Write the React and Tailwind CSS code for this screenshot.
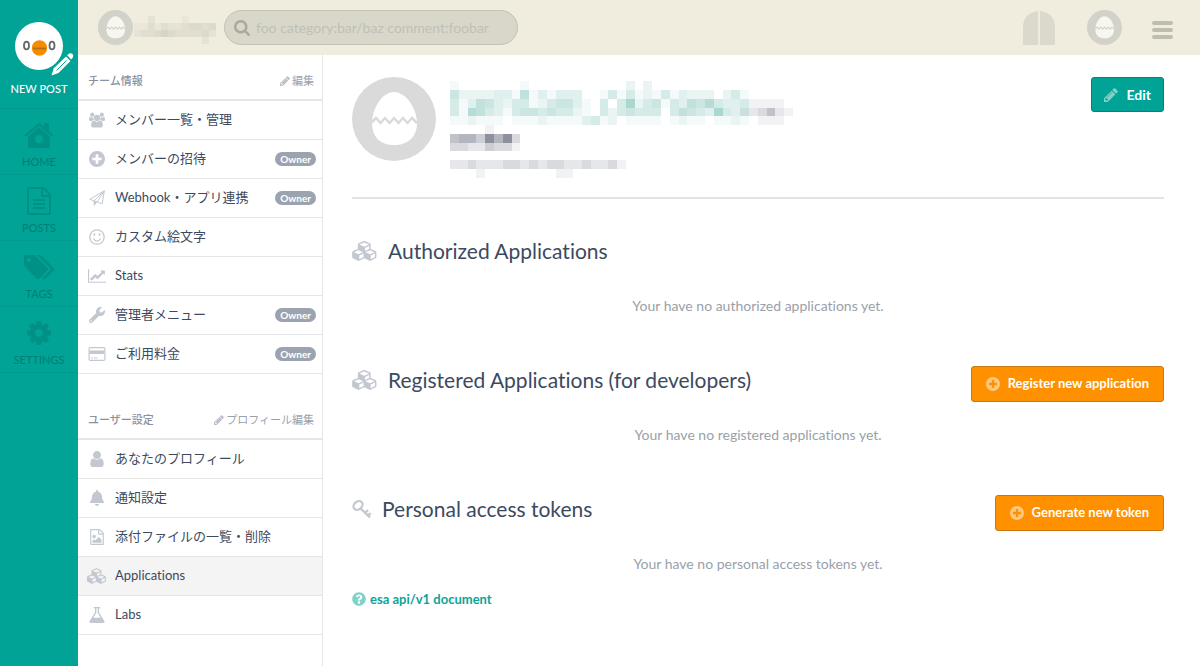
/**
 * App.jsx
 * Team settings page: nav rail, top bar, settings menu and the Applications panel.
 */
import { FaBell, FaQuestionCircle, FaWrench } from 'react-icons/fa';

// Solid glyphs drawn on a 1792 unit tall grid
const GLYPHS = {
  pencil: {
    box: '128 128 1536 1536',
    d: 'M491 1536l91-91-235-235-91 91v107h128v128h107zm523-928q0-22-22-22-10 0-17 7l-542 542q-7 7-7 17 0 22 22 22 10 0 17-7l542-542q7-7 7-17zm-54-192l416 416-832 832h-416v-416zm683 96q0 53-37 90l-166 166-416-416 166-165q36-38 90-38 53 0 91 38l235 234q37 39 37 91z',
  },
  plus: {
    box: '128 128 1536 1536',
    d: 'M1344 960v-128q0-26-19-45t-45-19h-256v-256q0-26-19-45t-45-19h-128q-26 0-45 19t-19 45v256h-256q-26 0-45 19t-19 45v128q0 26 19 45t45 19h256v256q0 26 19 45t45 19h128q26 0 45-19t19-45v-256h256q26 0 45-19t19-45zm320-64q0 209-103 385.5t-279.5 279.5-385.5 103-385.5-103-279.5-279.5-103-385.5 103-385.5 279.5-279.5 385.5-103 385.5 103 279.5 279.5 103 385.5z',
  },
  search: {
    box: '64 128 1664 1664',
    d: 'M1216 832q0-185-131.5-316.5t-316.5-131.5-316.5 131.5-131.5 316.5 131.5 316.5 316.5 131.5 316.5-131.5 131.5-316.5zm512 832q0 52-38 90t-90 38q-54 0-90-38l-343-342q-179 124-399 124-143 0-273.5-55.5t-225-150-150-225-55.5-273.5 55.5-273.5 150-225 225-150 273.5-55.5 273.5 55.5 225 150 150 225 55.5 273.5q0 220-124 399l343 343q37 37 37 90z',
  },
  user: {
    box: '256 128 1280 1536',
    d: 'M1536 1399q0 109-62.5 187t-150.5 78h-854q-88 0-150.5-78t-62.5-187q0-85 8.5-160.5t31.5-152 58.5-131 94-89 134.5-34.5q131 128 313 128t313-128q76 0 134.5 34.5t94 89 58.5 131 31.5 152 8.5 160.5zm-256-887q0 159-112.5 271.5t-271.5 112.5-271.5-112.5-112.5-271.5 112.5-271.5 271.5-112.5 271.5 112.5 112.5 271.5z',
  },
  users: {
    box: '64 0 1920 1792',
    d: 'M657 896q-162 5-265 128h-134q-82 0-138-40.5t-56-118.5q0-353 124-353 6 0 43.5 21t97.5 42.5 119 21.5q67 0 133-23-5 37-5 66 0 139 81 256zm1071 637q0 120-73 189.5t-194 69.5h-874q-121 0-194-69.5t-73-189.5q0-53 3.5-103.5t14-109 26.5-108.5 43-97.5 62-81 85.5-53.5 111.5-20q10 0 43 21.5t73 48 107 48 135 21.5 135-21.5 107-48 73-48 43-21.5q61 0 111.5 20t85.5 53.5 62 81 43 97.5 26.5 108.5 14 109 3.5 103.5zm-1024-1277q0 106-75 181t-181 75-181-75-75-181 75-181 181-75 181 75 75 181zm704 384q0 159-112.5 271.5t-271.5 112.5-271.5-112.5-112.5-271.5 112.5-271.5 271.5-112.5 271.5 112.5 112.5 271.5zm576 225q0 78-56 118.5t-138 40.5h-134q-103-123-265-128 81-117 81-256 0-29-5-66 66 23 133 23 59 0 119-21.5t97.5-42.5 43.5-21q124 0 124 353zm-128-609q0 106-75 181t-181 75-181-75-75-181 75-181 181-75 181 75 75 181z',
  },
  chart: {
    box: '0 128 2048 1536',
    d: 'M2048 1536v128h-2048v-1536h128v1408h1920zm-128-1248v435q0 21-19.5 29.5t-35.5-7.5l-121-121-633 633q-10 10-23 10t-23-10l-233-233-416 416-192-192 585-585q10-10 23-10t23 10l233 233 464-464-121-121q-16-16-7.5-35.5t29.5-19.5h435q14 0 23 9t9 23z',
  },
  cubes: {
    box: '0 0 2304 1792',
    d: 'M640 1632l384-192v-314l-384 164v342zm-64-454l404-173-404-173-404 173zm1088 454l384-192v-314l-384 164v342zm-64-454l404-173-404-173-404 173zm-448-293l384-165v-266l-384 164v267zm-64-379l441-189-441-189-441 189zm1088 518v416q0 36-19 67t-52 47l-448 224q-25 14-57 14t-57-14l-448-224q-4-2-7-4-2 2-7 4l-448 224q-25 14-57 14t-57-14l-448-224q-33-16-52-47t-19-67v-416q0-38 21.5-70t56.5-48l434-186v-400q0-38 21.5-70t56.5-48l448-192q23-10 50-10t50 10l448 192q35 16 56.5 48t21.5 70v400l434 186q36 16 57 48t21 70z',
  },
  tags: {
    box: '0 128 1899 1515',
    d: 'M448 448q0-53-37.5-90.5t-90.5-37.5-90.5 37.5-37.5 90.5 37.5 90.5 90.5 37.5 90.5-37.5 37.5-90.5zm1067 576q0 53-37 90l-491 492q-39 37-91 37-53 0-90-37l-715-716q-38-37-64.5-101t-26.5-117v-416q0-52 38-90t90-38h416q53 0 117 26.5t102 64.5l715 714q37 39 37 91zm384 0q0 53-37 90l-491 492q-39 37-91 37-36 0-59-14t-53-45l470-470q37-37 37-90 0-52-37-91l-715-714q-38-38-102-64.5t-117-26.5h224q53 0 117 26.5t102 64.5l715 714q37 39 37 91z',
  },
  cog: {
    box: '128 128 1536 1536',
    d: 'M1152 896q0-106-75-181t-181-75-181 75-75 181 75 181 181 75 181-75 75-181zm512-109v222q0 12-8 23t-20 13l-185 28q-19 54-39 91 35 50 107 138 10 12 10 25t-9 23q-27 37-99 108t-94 71q-12 0-26-9l-138-108q-44 23-91 38-16 136-29 186-7 28-36 28h-222q-14 0-24.5-8.5t-11.5-21.5l-28-184q-49-16-90-37l-141 107q-10 9-25 9-14 0-25-11-126-114-165-168-7-10-7-23 0-12 8-23 15-21 51-66.5t54-70.5q-27-50-41-99l-183-27q-13-2-21-12.5t-8-23.5v-222q0-12 8-23t19-13l186-28q14-46 39-92-40-57-107-138-10-12-10-24 0-10 9-23 26-36 98.5-107.5t94.5-71.5q13 0 26 10l138 107q44-23 91-38 16-136 29-186 7-28 36-28h222q14 0 24.5 8.5t11.5 21.5l28 184q49 16 90 37l142-107q9-9 24-9 13 0 25 10 129 119 165 170 7 8 7 22 0 12-8 23-15 21-51 66.5t-54 70.5q26 50 41 98l183 28q13 2 21 12.5t8 23.5z',
  },
  file: {
    box: '128 0 1536 1792',
    d: 'M1596 380q28 28 48 76t20 88v1152q0 40-28 68t-68 28h-1344q-40 0-68-28t-28-68v-1600q0-40 28-68t68-28h896q40 0 88 20t76 48zm-444-244v376h376q-10-29-22-41l-313-313q-12-12-41-22zm384 1528v-1024h-416q-40 0-68-28t-28-68v-416h-768v1536h1280zm-1024-864q0-14 9-23t23-9h704q14 0 23 9t9 23v64q0 14-9 23t-23 9h-704q-14 0-23-9t-9-23v-64zm736 224q14 0 23 9t9 23v64q0 14-9 23t-23 9h-704q-14 0-23-9t-9-23v-64q0-14 9-23t23-9h704zm0 256q14 0 23 9t9 23v64q0 14-9 23t-23 9h-704q-14 0-23-9t-9-23v-64q0-14 9-23t23-9h704z',
  },
  image: {
    box: '128 0 1536 1792',
    d: 'M1596 380q28 28 48 76t20 88v1152q0 40-28 68t-68 28h-1344q-40 0-68-28t-28-68v-1600q0-40 28-68t68-28h896q40 0 88 20t76 48zm-444-244v376h376q-10-29-22-41l-313-313q-12-12-41-22zm384 1528v-1024h-416q-40 0-68-28t-28-68v-416h-768v1536h1280zm-128-448v320h-1024v-192l192-192 128 128 384-384zm-832-192q-80 0-136-56t-56-136 56-136 136-56 136 56 56 136-56 136-136 56z',
  },
  flask: {
    box: '96 128 1472 1536',
    d: 'M1527 1447q56 89 21.5 152.5t-140.5 63.5h-1152q-106 0-140.5-63.5t21.5-152.5l503-793v-399h-64q-26 0-45-19t-19-45 19-45 45-19h512q26 0 45 19t19 45-19 45-45 19h-64v399zm-779-725l-272 429h712l-272-429-20-31v-436h-128v436z',
  },
};

function Glyph({ name, className }) {
  return (
    <svg viewBox={GLYPHS[name].box} fill="currentColor" className={className} aria-hidden="true">
      <path d={GLYPHS[name].d} />
    </svg>
  );
}

function HomeIcon({ className }) {
  return (
    <svg viewBox="0 0 29 25" className={className} aria-hidden="true">
      <path d="M1 13.5L14.5 2 28 13.5" fill="none" stroke="currentColor" strokeWidth="2" />
      <path d="M19.5 1H24v8l-4.500-4z" fill="currentColor" />
      <path
        d="M14.500 5L25 14v9.500q0 1.500-1.500 1.500h-18Q4 25 4 23.500V14zm0 7.500a4 4 0 1 0 0 8 4 4 0 1 0 0-8z"
        fill="currentColor"
        fillRule="evenodd"
      />
    </svg>
  );
}

function PlaneIcon({ className }) {
  return (
    <svg viewBox="0 0 16 16" className={className} fill="none" stroke="currentColor" aria-hidden="true">
      <path d="M15.300.8L.9 9.200l4 1.700L15.300.8 13.200 13.800 8.300 11.800 15.300.8z" strokeLinejoin="round" />
      <path d="M5.200 10.900v4.400l2.700-3.300z" fill="currentColor" strokeLinejoin="round" />
    </svg>
  );
}

function SmileIcon({ className }) {
  return (
    <svg viewBox="0 0 16 16" className={className} fill="none" stroke="currentColor" aria-hidden="true">
      <circle cx="8" cy="8" r="7.200" strokeWidth="1.300" />
      <path d="M4.700 9.800q1 2.400 3.300 2.400t3.300-2.400" strokeWidth="1.200" strokeLinecap="round" />
      <circle cx="5.400" cy="5.600" r="1.100" fill="currentColor" stroke="none" />
      <circle cx="10.600" cy="5.600" r="1.100" fill="currentColor" stroke="none" />
    </svg>
  );
}

function CardIcon({ className }) {
  return (
    <svg viewBox="0 0 17 14" className={className} aria-hidden="true">
      <rect x=".6" y=".6" width="15.800" height="12.800" rx="1.200" fill="none" stroke="currentColor" strokeWidth="1.200" />
      <path d="M1 3.500h15v3.500H1zM2.500 10.500h2v1h-2zM5.500 10.500h3.500v1H5.500z" fill="currentColor" />
    </svg>
  );
}

function KeyIcon({ className }) {
  return (
    <svg viewBox="0 0 20 19" className={className} fill="none" stroke="currentColor" aria-hidden="true">
      <ellipse cx="6" cy="5.500" rx="5" ry="3.800" strokeWidth="2.200" transform="rotate(-42 6 5.500)" />
      <path d="M8.500 8.500L18 17.500M13 13l3-3M16 15.800l2.600-2.600" strokeWidth="2.400" />
    </svg>
  );
}

function BirdLogo() {
  return (
    <svg viewBox="0 0 60 56" className="h-14 w-15" aria-hidden="true">
      <circle cx="25" cy="25" r="24" fill="#fff" />
      <circle cx="25.500" cy="27" r="7.700" fill="#f68b00" />
      <path d="M19 27.500h13" stroke="#b5711a" strokeWidth="1.800" />
      <ellipse cx="12.500" cy="24.500" rx="2.500" ry="3.800" fill="none" stroke="#666" strokeWidth="1.800" />
      <ellipse cx="38" cy="24.500" rx="2.500" ry="3.800" fill="none" stroke="#666" strokeWidth="1.800" />
      <path d="M37.500 54.500l2.300-7.200L52 35.500l4.500 4.500L44.500 52z" fill="#fff" />
      <path d="M42.500 49.500l10-10" stroke="#00a396" strokeWidth="1" />
      <path d="M53.200 34.300l2-1.700q2-1 3.300.5t.3 3.300l-1.700 2z" fill="#fff" />
    </svg>
  );
}

// The ring takes the text colour, the zigzag crack matches it
function EggAvatar({ className, shell = '#fff' }) {
  return (
    <svg viewBox="0 0 84 84" className={className} aria-hidden="true">
      <circle cx="42" cy="42" r="42" fill="currentColor" />
      <path d="M42 15c12 0 23 17 23 31 0 14-9 22-23 22s-22-8-22-22c0-14 10-31 22-31z" fill={shell} />
      <path
        d="M19 46l5-5 4.500 5 4.500-5 4.500 5 4.500-5 4.500 5 4.500-5 4.500 5 4.500-5 5 5"
        fill="none"
        stroke="currentColor"
        strokeWidth="2.500"
      />
    </svg>
  );
}

// Redacted text: each digit is the strength of one tile
const PROFILE_TEAL = [
  '1000000010000000000020200000000000',
  '5222233161313330014141214132220241',
  '4136532441245531040482451436574334',
  '4176431455454421042454440465438434',
  '1121110111211113412011110121101121',
];
const PROFILE_GRAY = [
  '',
  '',
  '000000000000000000000000000000000011110',
  '000000000000000000000000000000000123521',
  '000000000000000000000000000000000001110',
  '0000100',
  '56649693',
  '33224331',
  '',
  '22322233232332232231',
  '00010000000011000000',
];
const TEAM_GRAY = ['002000010000', '113132234434', '233454333342', '000000000020'];

function Tiles({ rows, color, strength }) {
  return rows.flatMap((row, y) =>
    [...row].map((level, x) =>
      level === '0' ? null : (
        <rect key={`${x}-${y}`} x={x} y={y} width="1" height="1" fill={color} fillOpacity={Number(level) * strength} />
      )
    )
  );
}

const NAV = [
  { label: 'HOME', icon: <HomeIcon className="h-[26px] w-[30px]" /> },
  { label: 'POSTS', icon: <Glyph name="file" className="h-7 w-6" /> },
  { label: 'TAGS', icon: <Glyph name="tags" className="h-6 w-[30px]" /> },
  { label: 'SETTINGS', icon: <Glyph name="cog" className="size-6" /> },
];

const TEAM_MENU = [
  { label: 'メンバー一覧・管理', icon: <Glyph name="users" className="size-4" /> },
  { label: 'メンバーの招待', icon: <Glyph name="plus" className="size-4" />, owner: true },
  { label: 'Webhook・アプリ連携', icon: <PlaneIcon className="size-4" />, owner: true },
  { label: 'カスタム絵文字', icon: <SmileIcon className="size-4" /> },
  { label: 'Stats', icon: <Glyph name="chart" className="h-[14px] w-[18px]" /> },
  { label: '管理者メニュー', icon: <FaWrench className="size-4 -scale-x-100 rotate-90" />, owner: true },
  { label: 'ご利用料金', icon: <CardIcon className="h-[14px] w-[18px]" />, owner: true },
];

const USER_MENU = [
  { label: 'あなたのプロフィール', icon: <Glyph name="user" className="h-4 w-[14px]" /> },
  { label: '通知設定', icon: <FaBell className="size-4" /> },
  { label: '添付ファイルの一覧・削除', icon: <Glyph name="image" className="h-4 w-[14px]" /> },
  { label: 'Applications', icon: <Glyph name="cubes" className="h-4 w-5" />, active: true },
  { label: 'Labs', icon: <Glyph name="flask" className="size-4" /> },
];

function MenuSection({ title, action, items }) {
  return (
    <section>
      <header className="flex h-[46px] items-center justify-between border-b-2 border-[#e6e6e6] pt-2 pr-2 pl-[10px] text-[11px]">
        <h2 className="font-medium text-[#8b91a0]">{title}</h2>
        <a href="#edit" className="flex items-center gap-[2px] text-[#9a9fae]">
          <Glyph name="pencil" className="size-[10px] text-[#b9bdc6]" />
          {action}
        </a>
      </header>
      <ul>
        {items.map((item) => (
          <li key={item.label} className="border-b border-[#e6e6e6]">
            <a
              href="#menu"
              className={
                item.active
                  ? 'flex h-[38px] items-center bg-[#f4f4f4] pr-[6px] pl-[9px]'
                  : 'flex h-[38px] items-center pr-[6px] pl-[9px]'
              }
            >
              <span className="flex w-5 justify-center text-[#c3c8d0]">{item.icon}</span>
              <span className="ml-2 flex-1 text-[13px] text-[#3c4a60]">{item.label}</span>
              {item.owner && (
                <span className="h-[14px] rounded-full bg-[#9ba3b0] px-[5px] text-[10px] leading-[14px] font-bold text-white">
                  Owner
                </span>
              )}
            </a>
          </li>
        ))}
      </ul>
    </section>
  );
}

function AppSection({ title, icon, empty, button }) {
  return (
    <section className="h-[129px]">
      <div className="flex h-9 items-center justify-between">
        <h2 className="flex items-center gap-[10px] text-[21px] text-[#3c4a60]">
          {icon}
          {title}
        </h2>
        {button && (
          <button className="mt-2 flex h-9 items-center gap-2 rounded-[3px] border border-[#c87a10] bg-[#ff9100] px-[14px] text-[13px] font-bold text-white">
            <Glyph name="plus" className="size-[14px] text-[#ffc87f]" />
            {button}
          </button>
        )}
      </div>
      <p className="mt-[27px] text-center text-[14px] leading-5 text-[#9a9fa9]">{empty}</p>
    </section>
  );
}

export default function App() {
  return (
    <div className="flex min-h-screen bg-white font-['Lato','Noto_Sans_CJK_JP',sans-serif] [font-variant-ligatures:none]">
      {/* Nav rail */}
      <nav className="w-[78px] shrink-0 bg-[#00a396] text-center text-[11px]">
        <a href="#new" className="flex h-[109px] flex-col items-center border-b border-[#009b8e] pt-[21px] text-white">
          <span className="ml-[10px]">
            <BirdLogo />
          </span>
          <span className="mt-1 leading-4 font-medium">NEW POST</span>
        </a>
        {NAV.map((item) => (
          <a
            key={item.label}
            href="#nav"
            className="flex h-[66px] flex-col items-center justify-end border-b border-[#009b8e] pb-1 text-[#007f75]"
          >
            <span className="flex h-7 items-center text-[#009085]">{item.icon}</span>
            <span className="mt-[5px] leading-4">{item.label}</span>
          </a>
        ))}
      </nav>

      <div className="flex min-w-0 flex-1 flex-col">
        {/* Top bar */}
        <header className="flex h-[55px] shrink-0 items-center bg-[#f0edde] pr-[27px] pl-5">
          <EggAvatar className="size-[35px] text-[#d3d2ca]" shell="#f8f7ef" />
          <svg viewBox="0 0 12 4" className="mt-1 ml-[1px] h-7 w-[82px]" shapeRendering="crispEdges" aria-hidden="true">
            <Tiles rows={TEAM_GRAY} color="#8c9088" strength={0.05} />
          </svg>
          <label className="ml-2 flex h-[35px] w-[294px] items-center gap-[6px] rounded-full border border-[#c3c2b4] bg-[#d9d7c9] px-[9px]">
            <Glyph name="search" className="size-4 text-[#a9a99c]" />
            <input
              type="search"
              aria-label="Search posts"
              placeholder="foo category:bar/baz comment:foobar"
              className="min-w-0 flex-1 bg-transparent text-[14px] outline-none placeholder:text-[#bfc0b6]"
            />
          </label>
          <svg viewBox="0 0 32 34" className="ml-auto h-[34px] w-8" fill="#dbd9cb" aria-hidden="true">
            <path d="M0 34V15Q1 2 15.200 0v34zM17 0Q31 2 32 15v19H17z" />
          </svg>
          <EggAvatar className="ml-8 size-[35px] text-[#d3d2ca]" shell="#f8f7ef" />
          <button aria-label="Menu" className="mt-1 ml-[30px] flex flex-col gap-[3px]">
            <span className="h-1 w-[21px] rounded-sm bg-[#bfbdb0]" />
            <span className="h-1 w-[21px] rounded-sm bg-[#bfbdb0]" />
            <span className="h-1 w-[21px] rounded-sm bg-[#bfbdb0]" />
          </button>
        </header>

        <div className="flex flex-1">
          {/* Settings menu */}
          <aside className="flex w-[245px] shrink-0 flex-col gap-5 border-r border-[#e6e6e6]">
            <MenuSection title="チーム情報" action="編集" items={TEAM_MENU} />
            <MenuSection title="ユーザー設定" action="プロフィール編集" items={USER_MENU} />
          </aside>

          <main className="min-w-0 flex-1 pt-[22px] pr-9 pl-[29px]">
            {/* Profile */}
            <div className="flex h-[122px] items-start border-b-2 border-[#e2e2e2]">
              <EggAvatar className="size-[84px] text-[#dadada]" />
              <svg viewBox="0 0 39 11" className="mt-1 ml-[14px] h-[97px] w-[343px]" shapeRendering="crispEdges" aria-hidden="true">
                <Tiles rows={PROFILE_TEAL} color="#2f9c8b" strength={0.05} />
                <Tiles rows={PROFILE_GRAY} color="#3c4259" strength={0.065} />
              </svg>
              <button className="ml-auto flex h-[35px] items-center gap-2 rounded-[3px] border border-[#008478] bg-[#00a396] px-3 text-[14px] font-bold text-white">
                <Glyph name="pencil" className="size-[14px] text-[#7fd1ca]" />
                Edit
              </button>
            </div>

            <div className="mt-[34px]">
              <AppSection
                title="Authorized Applications"
                icon={<Glyph name="cubes" className="h-5 w-[26px] text-[#c3c8d0]" />}
                empty="Your have no authorized applications yet."
              />
              <AppSection
                title="Registered Applications (for developers)"
                icon={<Glyph name="cubes" className="h-5 w-[26px] text-[#c3c8d0]" />}
                empty="Your have no registered applications yet."
                button="Register new application"
              />
              <AppSection
                title="Personal access tokens"
                icon={<KeyIcon className="h-[19px] w-5 text-[#c3c8d0]" />}
                empty="Your have no personal access tokens yet."
                button="Generate new token"
              />
            </div>

            <a href="#docs" className="-mt-[31px] flex items-center gap-1 text-[13px] leading-5 font-bold text-[#0aa598]">
              <FaQuestionCircle className="size-[14px] text-[#7fd1ca]" />
              esa api/v1 document
            </a>
          </main>
        </div>
      </div>
    </div>
  );
}
